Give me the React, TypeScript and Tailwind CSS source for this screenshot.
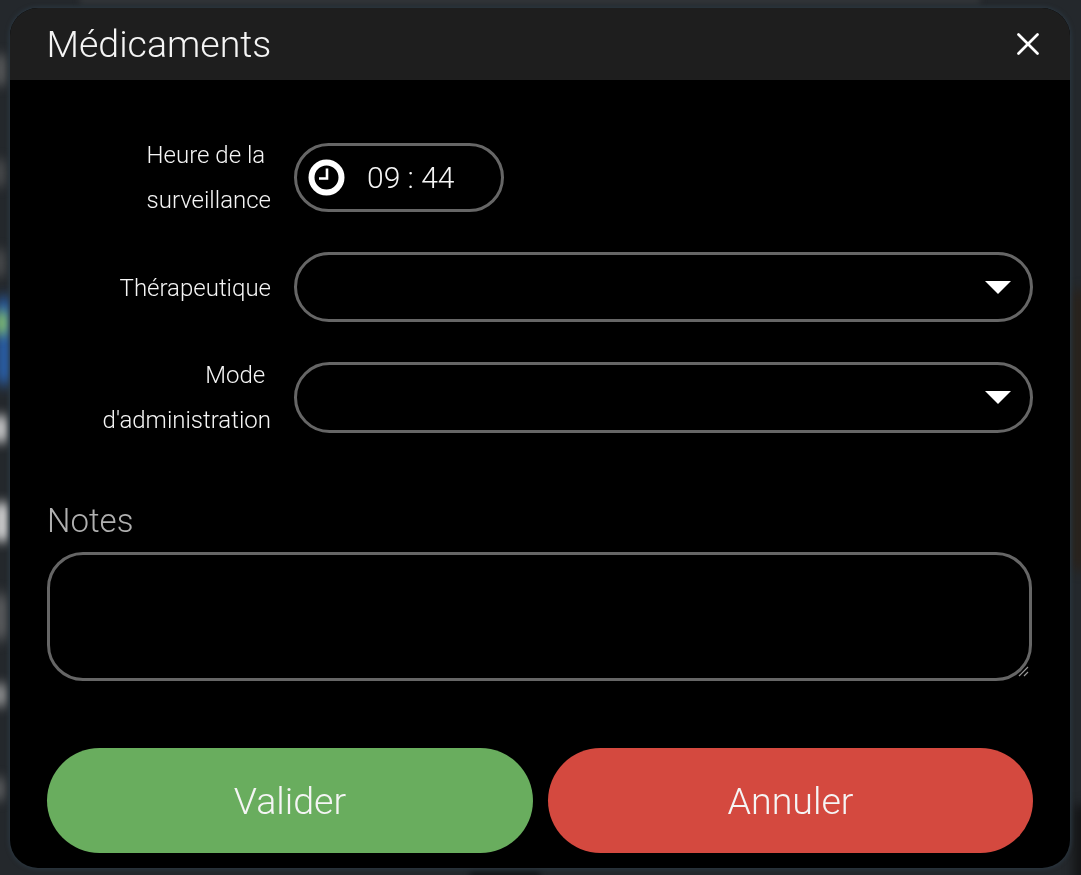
import { X } from 'lucide-react';

function ClockIcon() {
  return (
    <svg width="37" height="37" viewBox="0 0 37 37" fill="none" className="shrink-0">
      <circle cx="18.5" cy="18.5" r="15" stroke="white" strokeWidth="6" />
      <path d="M19 9.5V19.5H11" stroke="white" strokeWidth="2.6" />
    </svg>
  );
}

function FormRow({ label, children, className }: { label: string[]; children: React.ReactNode; className?: string }) {
  return (
    <div className={`flex items-center ${className ?? ''}`}>
      <div className="w-[224px] shrink-0 translate-y-px text-[24px] leading-[45px] font-light text-[#f5f5f5]">
        <div className="flex flex-col items-end">
          {label.map((line) => (
            <span key={line} className="whitespace-pre">
              {line}
            </span>
          ))}
        </div>
      </div>
      {children}
    </div>
  );
}

function SelectBox({ height }: { height: string }) {
  return (
    <div className={`ml-[23px] flex w-[739px] items-center justify-end rounded-[36px] border-[3px] border-[#666666] pr-[19px] ${height}`}>
      <svg width="26" height="13" viewBox="0 0 26 13">
        <path d="M0 0H26L13 13Z" fill="white" />
      </svg>
    </div>
  );
}

export default function App() {
  return (
    <div className="relative h-[875px] w-[1081px] overflow-hidden bg-[#24282c] pt-2 pl-2.5 font-['Roboto',sans-serif]">
      {/* blurred page behind the modal */}
      <div className="absolute top-[55px] left-[-4px] h-[30px] w-[8px] bg-[#777777] blur-[6px]" />
      <div className="absolute top-[160px] left-[-4px] h-[26px] w-[7px] bg-[#666666] blur-[6px]" />
      <div className="absolute top-[250px] left-[-4px] h-[26px] w-[7px] bg-[#666666] blur-[6px]" />
      <div className="absolute top-[298px] left-[-4px] h-[86px] w-[18px] bg-[#2a64b4] blur-[7px]" />
      <div className="absolute top-[312px] left-[-4px] h-[22px] w-[12px] bg-[#8fcc66] blur-[6px]" />
      <div className="absolute top-[416px] left-[-5px] h-[26px] w-[11px] bg-[#ffffff] blur-[6px]" />
      <div className="absolute top-[503px] left-[-5px] h-[38px] w-[13px] bg-[#f5f5f5] blur-[6px]" />
      <div className="absolute top-[595px] left-[-5px] h-[44px] w-[9px] bg-[#888888] blur-[7px]" />
      <div className="absolute top-[684px] left-[-5px] h-[22px] w-[10px] bg-[#bbbbbb] blur-[6px]" />
      <div className="absolute top-[778px] left-[-5px] h-[22px] w-[7px] bg-[#888888] blur-[6px]" />
      <div className="absolute top-[290px] right-[-4px] h-[280px] w-[12px] bg-[#2a2118] blur-[6px]" />
      <div className="absolute top-[805px] right-[-6px] h-[80px] w-[12px] bg-[#0f0f10] blur-[6px]" />
      <div className="absolute top-[-3px] left-[80px] h-[7px] w-[900px] bg-[#35383b] blur-[3px]" />
      <div className="absolute bottom-[-3px] left-[470px] h-[6px] w-[70px] bg-[#0f1114] blur-[3px]" />

      <div className="relative flex h-[860px] w-[1060px] transform-gpu flex-col overflow-hidden rounded-[28px] bg-black text-white shadow-[0_0_4px_1px_#2b3843]">
        <header className="flex h-[72px] shrink-0 items-center justify-between bg-[#1e1e1e] pr-[27px] pl-[36.5px]">
          <h1 className="translate-y-px text-[37.5px] leading-none font-light text-[#f5f5f5]">Médicaments</h1>
          <X size={38} strokeWidth={1.7} color="white" className="-mr-[4px]" />
        </header>

        <div className="flex flex-1 flex-col pt-[52px] pr-[37px] pl-[37px]">
          <FormRow label={['Heure de la ', 'surveillance']}>
            <div className="ml-[23px] flex h-[69px] w-[210px] items-center rounded-full border-[3px] border-[#666666] pl-[11px]">
              <ClockIcon />
              <span className="ml-[22px] text-[30px] font-light text-[#f5f5f5]">09 : 44</span>
            </div>
          </FormRow>

          <FormRow label={['Thérapeutique']} className="mt-[30px]">
            <SelectBox height="h-[70px]" />
          </FormRow>

          <FormRow label={['Mode ', "d'administration"]} className="mt-[30px]">
            <SelectBox height="h-[71px]" />
          </FormRow>

          <label className="mt-[59px] text-[33px] leading-[40px] font-light text-[#b0b0b0]">Notes</label>
          <div className="relative mt-[11px] h-[129px] w-[985px] rounded-[36px] border-[3px] border-[#666666]">
            <svg width="12" height="12" viewBox="0 0 12 12" className="absolute right-[-1px] bottom-0">
              <path d="M1 10L10 1M6 10L10 6" stroke="#999999" strokeWidth="1.2" />
            </svg>
          </div>

          <div className="mt-[67px] flex gap-[15px]">
            <button className="h-[105px] w-[486px] rounded-full bg-[#69ad5e] text-[37.6px] font-light text-[#f5f5f5]">
              <span className="relative top-px">Valider</span>
            </button>
            <button className="h-[105px] w-[485px] rounded-full bg-[#d4493f] text-[37.6px] font-light text-[#f5f5f5]">
              <span className="relative top-px">Annuler</span>
            </button>
          </div>
        </div>
      </div>
    </div>
  );
}
